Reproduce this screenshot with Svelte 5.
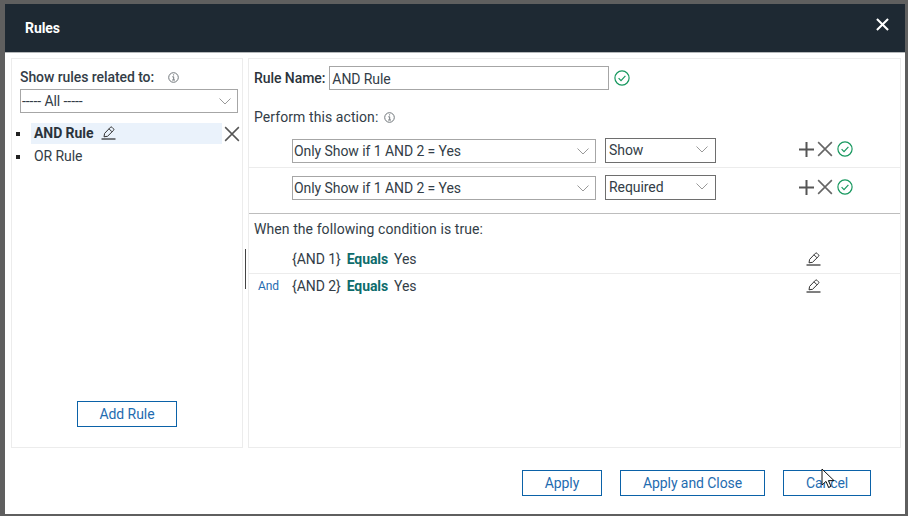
<script>
	const actions = [
		{ name: 'Only Show if 1 AND 2 = Yes', type: 'Show' },
		{ name: 'Only Show if 1 AND 2 = Yes', type: 'Required' }
	];
	const conditions = [
		{ join: '', field: '{AND 1}' },
		{ join: 'And', field: '{AND 2}' }
	];
</script>

{#snippet chevron()}
	<svg class="chevron" width="12" height="7" viewBox="0 0 12 7"><path d="M.5.5l5.500 5.500L11.500.5" fill="none" stroke="#999" stroke-width="1" /></svg>
{/snippet}

{#snippet info()}
	<svg class="info" width="11" height="11" viewBox="0 0 11 11">
		<circle cx="5.500" cy="5.500" r="4.800" fill="none" stroke="#70767a" />
		<path d="M4.300 4.800h1.400v3M4.100 8h2.900M5 2.900h1.100" fill="none" stroke="#70767a" />
	</svg>
{/snippet}

{#snippet pencil()}
	<svg class="pencil" width="15" height="14" viewBox="0 0 15 14">
		<path d="M3 10.800l.6-3.400L9.400 1.300a1.100 1.100 0 0 1 1.600 0l1.500 1.500a1.100 1.100 0 0 1 0 1.600L6.500 10.300zM8 2.800l3 3" fill="none" stroke="#333" />
		<path d="M.5 13h14" stroke="#000" stroke-width="1" />
	</svg>
{/snippet}

{#snippet check(size)}
	<svg width={size} height={size} viewBox="0 0 16 16">
		<circle cx="8" cy="8" r="7.100" fill="none" stroke="#17985f" stroke-width="1.200" />
		<path d="M4.600 8.200l2.400 2.400 4.400-4.800" fill="none" stroke="#17985f" stroke-width="1.200" />
	</svg>
{/snippet}

{#snippet cross(size, color, width)}
	<svg width={size} height={size} viewBox="0 0 14 14"><path d="M1 1l12 12M13 1L1 13" fill="none" stroke={color} stroke-width={width} /></svg>
{/snippet}

<div class="page">
	<div class="modal">
		<header class="head">
			<span class="title">Rules</span>
			<button class="close" aria-label="Close">{@render cross(13, '#fff', 2.2)}</button>
		</header>

		<div class="body">
			<aside class="left">
				<div class="related">Show rules related to: <span class="related-info">{@render info()}</span></div>
				<div class="select all">----- All -----{@render chevron()}</div>
				<ul class="rules">
					<li>
						<span class="bullet"></span>
						<span class="rule active"><b>AND Rule</b>{@render pencil()}</span>
						<span class="rule-x">{@render cross(16, '#555', 1.3)}</span>
					</li>
					<li>
						<span class="bullet"></span>
						<span class="rule">OR Rule</span>
					</li>
				</ul>
				<button class="btn add">Add Rule</button>
			</aside>

			<div class="splitter"><span></span></div>

			<main class="right">
				<div class="name-row">
					<b>Rule Name:</b>
					<div class="name-input">AND Rule</div>
					{@render check(16)}
				</div>
				<div class="perform">Perform this action: <span class="perform-info">{@render info()}</span></div>

				<div class="actions">
					{#each actions as action}
						<div class="action">
							<div class="select action-name">{action.name}{@render chevron()}</div>
							<div class="select action-type">{action.type}{@render chevron()}</div>
							<div class="tools">
								<svg width="15" height="15" viewBox="0 0 15 15"><path d="M7.500 0v15M0 7.500h15" stroke="#555" stroke-width="2" /></svg>
								{@render cross(16, '#666', 1.4)}
								{@render check(16)}
							</div>
						</div>
					{/each}
				</div>

				<div class="when">When the following condition is true:</div>

				<div class="conds">
					{#each conditions as cond}
						<div class="cond">
							<span class="join">{cond.join}</span>
							<span class="field">{cond.field}</span>
							<b class="op">Equals</b>
							<span class="val">Yes</span>
							<span class="cond-edit">{@render pencil()}</span>
						</div>
					{/each}
				</div>
			</main>
		</div>

		<footer class="foot">
			<button class="btn apply">Apply</button>
			<button class="btn apply-close">Apply and Close</button>
			<button class="btn cancel">Cancel</button>
		</footer>
	</div>

	<svg class="cursor" width="14" height="22" viewBox="0 0 14 22">
		<path d="M1 1v16l4-3.600 2.600 6 2.400-1-2.600-5.800H13z" fill="#fff" stroke="#111" stroke-width="1" />
	</svg>
</div>

<style>
	:global(body) {
		margin: 0;
		background: #5f5f5f;
	}

	.page {
		position: relative;
		width: 908px;
		height: 516px;
		overflow: hidden;
		background: #5f5f5f;
		padding: 4px 0 0 5px;
		box-sizing: border-box;
		font-family: Roboto, 'Liberation Sans', sans-serif;
		font-size: 14px;
		letter-spacing: -0.07px;
		color: #333d47;
	}

	.modal {
		width: 900px;
		height: 510px;
		background: #fff;
		display: flex;
		flex-direction: column;
	}

	.head {
		height: 48px;
		flex: none;
		background: #1e2933;
		border-bottom: 1px solid #b5b8ba;
		display: flex;
		align-items: center;
		justify-content: space-between;
		padding: 0 16px 0 20px;
		box-sizing: content-box;
	}

	.title {
		color: #fff;
		font-weight: 700;
		font-size: 14px;
	}

	.close {
		border: 0;
		background: none;
		padding: 0;
		display: flex;
		margin-bottom: 7px;
	}

	.body {
		display: flex;
		padding: 5px 4px 0 6px;
		height: 395px;
		flex: none;
		box-sizing: border-box;
	}

	.left {
		width: 232px;
		flex: none;
		border: 1px solid #ececec;
		box-sizing: border-box;
		display: flex;
		flex-direction: column;
		padding: 0 4px 0 8px;
	}

	.related {
		font-weight: 500;
		margin-top: 9px;
		height: 19px;
		line-height: 19px;
		display: flex;
		align-items: center;
	}

	.related-info {
		display: flex;
		margin-left: 14px;
	}

	.select {
		border: 1px solid #a6a6a6;
		box-sizing: border-box;
		height: 24px;
		display: flex;
		align-items: center;
		justify-content: space-between;
		padding: 0 6px 0 1px;
		background: #fff;
	}

	.all {
		width: 218px;
		margin-top: 2px;
	}

	.rules {
		list-style: none;
		margin: 9px 0 0;
		padding: 0;
		flex: 1;
	}

	.rules li {
		display: flex;
		align-items: center;
		height: 23px;
	}

	.bullet {
		width: 4px;
		height: 4px;
		background: #222;
		margin: 0 11px 0 -4px;
		flex: none;
	}

	.rule {
		flex: none;
		width: 191px;
		height: 21px;
		padding: 0 0 2px 3px;
		box-sizing: border-box;
		display: flex;
		align-items: center;
		gap: 8px;
	}

	.active {
		background: #eaf2fb;
	}

	.active b {
		color: #2b333b;
	}

	.rule-x {
		flex: none;
		display: flex;
		margin-left: 2px;
	}

	.pencil {
		flex: none;
	}

	.btn {
		font-family: inherit;
		font-size: 14px;
		letter-spacing: inherit;
		color: #1f6cb0;
		background: #fff;
		border: 1px solid #0b62a8;
		border-radius: 0;
		padding: 0;
		height: 26px;
	}

	.add {
		width: 100px;
		align-self: flex-start;
		margin: 0 0 20px 57px;
		flex: none;
	}

	.splitter {
		width: 5px;
		flex: none;
		display: flex;
		justify-content: center;
		align-items: flex-start;
	}

	.splitter span {
		width: 1px;
		height: 40px;
		margin-top: 191px;
		background: #444;
		margin-left: -1px;
	}

	.right {
		flex: 1;
		border: 1px solid #ececec;
		box-sizing: border-box;
		display: flex;
		flex-direction: column;
	}

	.name-row {
		display: flex;
		align-items: center;
		padding-left: 5px;
		margin-top: 7px;
		height: 24px;
	}

	.name-row b {
		font-weight: 500;
		color: #2b333b;
		margin-right: 4px;
	}

	.name-input {
		width: 280px;
		height: 24px;
		border: 1px solid #a6a6a6;
		box-sizing: border-box;
		padding: 1px 0 0 2px;
		line-height: 23px;
		margin-right: 5px;
	}

	.perform {
		margin: 18px 0 0 5px;
		height: 19px;
		line-height: 19px;
		display: flex;
		align-items: center;
		letter-spacing: 0.08px;
	}

	.perform-info {
		display: flex;
		margin-left: 6px;
	}

	.actions {
		margin-top: 4px;
	}

	.action {
		display: flex;
		align-items: flex-start;
		height: 37px;
		padding: 8px 0 0 43px;
		border-bottom: 1px solid #ececec;
		box-sizing: border-box;
	}

	.action:last-child {
		height: 46px;
		border-bottom: 1px solid #bdbdbd;
	}

	.action-name {
		width: 304px;
		margin-right: 9px;
	}

	.action-type {
		width: 111px;
		height: 25px;
		margin-top: -1px;
		border-color: #6e6e6e;
		padding: 0 7px 2px 3px;
	}

	.tools {
		display: flex;
		align-items: center;
		gap: 3px;
		margin: 2px 0 0 83px;
	}

	.tools svg:last-child {
		margin-left: 1px;
	}

	.action:last-child .tools {
		margin-top: 3px;
	}

	.when {
		margin: 6px 0 0 5px;
		height: 19px;
		line-height: 19px;
		letter-spacing: 0.08px;
	}

	.conds {
		margin-top: 7px;
	}

	.cond {
		display: flex;
		align-items: center;
		height: 28px;
		padding-bottom: 1px;
		border-bottom: 1px solid #ececec;
		box-sizing: border-box;
	}

	.cond:last-child {
		height: 23px;
		padding-bottom: 0;
		border-bottom: 0;
	}

	.join {
		width: 43px;
		padding-left: 9px;
		box-sizing: border-box;
		color: #1f6cb0;
		font-size: 12px;
	}

	.op {
		color: #0e6c6c;
		margin: 0 6px;
	}

	.cond-edit {
		display: flex;
		margin-left: auto;
		margin-right: 79px;
	}

	.foot {
		flex: 1;
		display: flex;
		align-items: flex-start;
		padding: 22px 0 0 517px;
	}

	.apply {
		width: 80px;
		margin-right: 18px;
	}

	.apply-close {
		width: 145px;
		margin-right: 18px;
	}

	.cancel {
		width: 88px;
	}

	.cursor {
		position: absolute;
		left: 821px;
		top: 468px;
	}
</style>
